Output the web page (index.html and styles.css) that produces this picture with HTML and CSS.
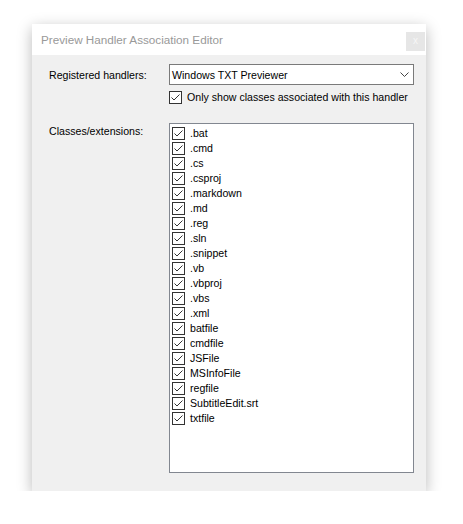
FILE: index.html
```html
<!DOCTYPE html>
<html>
<head>
<meta charset="utf-8">
<link rel="stylesheet" href="styles.css">
</head>
<body>
<div class="window">
  <div class="titlebar">
    <span class="title">Preview Handler Association Editor</span>
    <span class="close">x</span>
  </div>
  <div class="content">
    <div class="label row1">Registered handlers:</div>
    <div class="combo">
      <span>Windows TXT Previewer</span>
      <svg class="chev" width="9" height="5" viewBox="0 0 9 5"><path d="M0.5 0.5 L4.5 4.5 L8.5 0.5" fill="none" stroke="#444" stroke-width="1"/></svg>
    </div>
    <div class="chkrow">
      <span class="cb"><svg width="13" height="13" viewBox="0 0 13 13"><path d="M2.5 6.5 L5 9 L10.5 3.5" fill="none" stroke="#333" stroke-width="1"/></svg></span>
      <span>Only show classes associated with this handler</span>
    </div>
    <div class="label row3">Classes/extensions:</div>
    <div class="list" id="list"></div>
  </div>
</div>
<script>
var items = [".bat",".cmd",".cs",".csproj",".markdown",".md",".reg",".sln",".snippet",".vb",".vbproj",".vbs",".xml","batfile","cmdfile","JSFile","MSInfoFile","regfile","SubtitleEdit.srt","txtfile"];
var list = document.getElementById('list');
items.forEach(function(t){
  var d = document.createElement('div');
  d.className = 'item';
  d.innerHTML = '<span class="cb"><svg width="13" height="13" viewBox="0 0 13 13"><path d="M2.5 6.5 L5 9 L10.5 3.5" fill="none" stroke="#333" stroke-width="1"/></svg></span><span class="txt"></span>';
  d.lastChild.textContent = t;
  list.appendChild(d);
});
</script>
</body>
</html>
```

FILE: styles.css
```css
html, body {
  margin: 0;
  padding: 0;
  background: #ffffff;
}
body {
  padding: 24px 0 0 32px;
  font-family: "Liberation Sans", Arial, sans-serif;
  font-size: 10.6px;
  color: #000;
}
.window {
  width: 394px;
  height: 467px;
  background: #f0f0f0;
  box-shadow: 0 4px 14px rgba(0,0,0,0.28);
  display: flex;
  flex-direction: column;
}
.titlebar {
  height: 31px;
  background: #ffffff;
  display: flex;
  justify-content: space-between;
  align-items: flex-end;
  padding: 0 1px 4px 9px;
  box-sizing: border-box;
}
.title {
  color: #999999;
  font-size: 11.7px;
  line-height: 16px;
  align-self: center;
  margin-top: 4px;
}
.close {
  width: 19px;
  height: 19px;
  background: #e6e6e6;
  color: #f6f6f6;
  font-size: 10px;
  line-height: 18px;
  text-align: center;
}
.content {
  flex: 1;
  display: grid;
  grid-template-columns: 120px 245px;
  grid-template-rows: 21px 13px auto;
  row-gap: 6px;
  padding: 9px 12px 0 17px;
  align-content: start;
}
.label {
  grid-column: 1;
  line-height: 16px;
}
.label.row1 { grid-row: 1; align-self: center; }
.label.row3 { grid-row: 3; margin-top: 13px; align-self: start; }
.combo {
  grid-column: 2;
  grid-row: 1;
  border: 1px solid #7a7a7a;
  background: #ffffff;
  box-sizing: border-box;
  display: flex;
  align-items: center;
  justify-content: space-between;
  padding: 0 4px 0 2px;
}
.chev { display: block; }
.chkrow {
  grid-column: 2;
  grid-row: 2;
  display: flex;
  align-items: center;
  gap: 5px;
  white-space: nowrap;
  line-height: 13px;
}
.list {
  grid-column: 2;
  grid-row: 3;
  margin-top: 13px;
  height: 350px;
  border: 1px solid #828790;
  background: #ffffff;
  box-sizing: border-box;
  padding: 2px 2px 0 2px;
}
.item {
  height: 15px;
  line-height: 15px;
  display: flex;
  align-items: center;
  gap: 5px;
  white-space: nowrap;
}
.cb {
  width: 13px;
  height: 13px;
  box-sizing: border-box;
  border: 1px solid #333333;
  background: #ffffff;
  position: relative;
  flex: none;
}
.cb svg {
  position: absolute;
  left: -1px;
  top: -1px;
}
```
